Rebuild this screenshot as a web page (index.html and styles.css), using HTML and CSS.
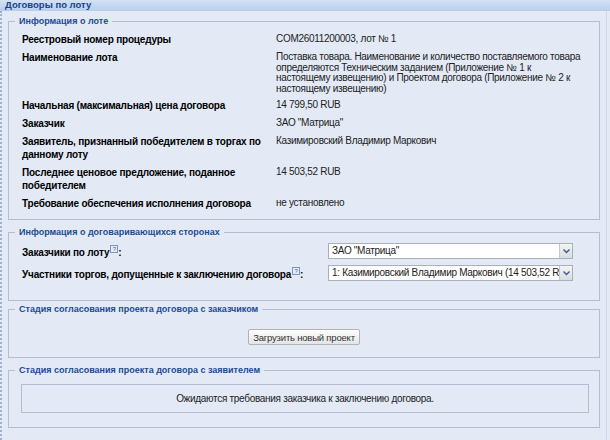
FILE: index.html
```html
<!DOCTYPE html>
<html lang="ru">
<head>
  <meta charset="UTF-8">
  <title>Договоры по лоту</title>
  <link rel="stylesheet" href="styles.css">
</head>
<body>

  <div class="title-bar">Договоры по лоту</div>

  <div class="content">

    <fieldset class="group lot-info">
      <legend>Информация о лоте</legend>
      <div class="info-grid">
        <div class="label">Реестровый номер процедуры</div>
        <div class="value">COM26011200003, лот № 1</div>

        <div class="label">Наименование лота</div>
        <div class="value">Поставка товара. Наименование и количество поставляемого товара определяются Техническим заданием (Приложение № 1 к<br>настоящему извещению) и Проектом договора (Приложение № 2 к настоящему извещению)</div>

        <div class="label">Начальная (максимальная) цена договора</div>
        <div class="value">14 799,50 RUB</div>

        <div class="label">Заказчик</div>
        <div class="value">ЗАО "Матрица"</div>

        <div class="label">Заявитель, признанный победителем в торгах по данному лоту</div>
        <div class="value">Казимировский Владимир Маркович</div>

        <div class="label">Последнее ценовое предложение, поданное победителем</div>
        <div class="value">14 503,52 RUB</div>

        <div class="label">Требование обеспечения исполнения договора</div>
        <div class="value">не установлено</div>
      </div>
    </fieldset>

    <fieldset class="group parties">
      <legend>Информация о договаривающихся сторонах</legend>
      <div class="parties-grid">
        <div class="label">Заказчики по лоту<span class="help">?</span>:</div>
        <div class="select">
          <span class="select-text">ЗАО "Матрица"</span>
          <span class="select-arrow">
            <svg width="7" height="5" viewBox="0 0 7 5"><path d="M0.5 0.5 L3.5 3.5 L6.5 0.5" fill="none" stroke="#3b5a8a" stroke-width="1.4"/></svg>
          </span>
        </div>

        <div class="label">Участники торгов, допущенные к заключению договора<span class="help">?</span>:</div>
        <div class="select">
          <span class="select-text">1: Казимировский Владимир Маркович (14 503,52 RUB)</span>
          <span class="select-arrow">
            <svg width="7" height="5" viewBox="0 0 7 5"><path d="M0.5 0.5 L3.5 3.5 L6.5 0.5" fill="none" stroke="#3b5a8a" stroke-width="1.4"/></svg>
          </span>
        </div>
      </div>
    </fieldset>

    <fieldset class="group customer-stage">
      <legend>Стадия согласования проекта договора с заказчиком</legend>
      <div class="button-row">
        <button class="btn">Загрузить новый проект</button>
      </div>
    </fieldset>

    <fieldset class="group applicant-stage">
      <legend>Стадия согласования проекта договора с заявителем</legend>
      <div class="notice">Ожидаются требования заказчика к заключению договора.</div>
    </fieldset>

  </div>

</body>
</html>
```

FILE: styles.css
```css
body {
  margin: 0;
  background-color: #e3eaf6;
  font-family: "Liberation Sans", Arial, sans-serif;
  font-size: 10px;
  color: #111;
}

.title-bar {
  height: 11px;
  line-height: 9px;
  padding-left: 5px;
  background: linear-gradient(#d3e1f3, #b8ceeb);
  color: #15428b;
  font-weight: bold;
  font-size: 9.5px;
  overflow: hidden;
}

.content {
  border-left: 2px dotted #9fb1cf;
  border-right: 1px solid #cbd7ea;
  padding: 4px 6px 10px 6px;
  margin-right: 3px;
  min-height: 415px;
}

/* Fieldsets */
.group {
  margin: 0;
  padding: 0;
  border: 1px solid #b7bdd0;
}

.group legend {
  margin-left: 6px;
  padding: 0 4px;
  font-size: 9px;
  line-height: 12px;
  font-weight: bold;
  color: #1b4a94;
}

.parties {
  margin-top: 6px;
}

.customer-stage {
  margin-top: 2px;
}

.applicant-stage {
  margin-top: 6px;
}

/* Lot info */
.info-grid {
  display: grid;
  grid-template-columns: 254px 314px;
  row-gap: 5px;
  padding: 6px 0 9px 13px;
}

.label {
  font-weight: bold;
  font-size: 10px;
  letter-spacing: -0.2px;
  line-height: 13px;
  color: #000;
}

.info-grid .label {
  padding-right: 4px;
}

.value {
  font-size: 10px;
  letter-spacing: -0.3px;
  line-height: 10.5px;
  padding-top: 1px;
  color: #222;
}

/* Parties */
.parties-grid {
  display: grid;
  grid-template-columns: 306px 245px;
  row-gap: 6px;
  align-items: center;
  padding: 5px 0 19px 13px;
}

.parties-grid .label {
  height: 16px;
  padding-top: 3px;
  box-sizing: border-box;
}

.help {
  display: inline-block;
  position: relative;
  top: -5px;
  width: 6px;
  height: 6px;
  margin-left: 1px;
  border: 1px solid #7d97c4;
  font-size: 6px;
  line-height: 6px;
  letter-spacing: 0;
  text-align: center;
  font-weight: normal;
  color: #4466aa;
  vertical-align: baseline;
}

.select {
  display: flex;
  height: 16px;
  box-sizing: border-box;
  border: 1px solid #a9b0bb;
  background: #fff;
}

.select-text {
  flex: 1;
  padding-left: 3px;
  line-height: 14px;
  letter-spacing: -0.3px;
  white-space: nowrap;
  overflow: hidden;
  color: #222;
}

.select-arrow {
  width: 12px;
  display: flex;
  align-items: center;
  justify-content: center;
  border-left: 1px solid #c4c9d0;
  background: linear-gradient(#f4f4f4, #d9dcdf);
}

/* Customer stage */
.button-row {
  display: flex;
  justify-content: center;
  padding: 14px 0 12px;
}

.btn {
  height: 16px;
  padding: 0 4px;
  font-family: "Liberation Sans", Arial, sans-serif;
  font-size: 9.5px;
  letter-spacing: -0.2px;
  color: #333;
  background: linear-gradient(#ffffff, #e4e4e4);
  border: 1px solid #b3b3b3;
  border-radius: 2px;
  cursor: pointer;
}

/* Applicant stage */
.notice {
  margin: 8px 10px 14px 12px;
  height: 29px;
  line-height: 27px;
  box-sizing: border-box;
  border: 1px solid #b7bdd0;
  text-align: center;
  letter-spacing: -0.3px;
  color: #222;
}
```
